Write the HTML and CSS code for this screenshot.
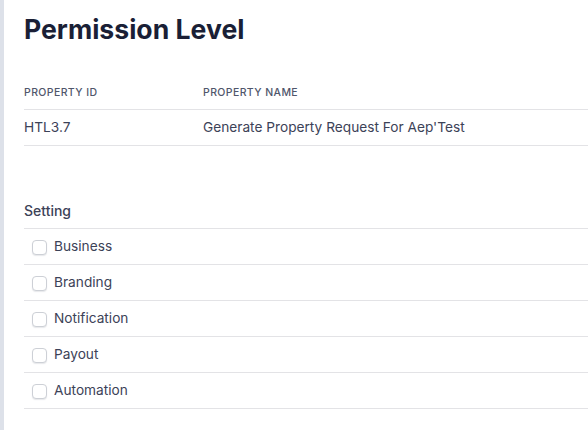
FILE: index.html
```html
<!DOCTYPE html>
<html lang="en">
<head>
    <meta charset="UTF-8">
    <meta name="viewport" content="width=device-width, initial-scale=1.0">
    <title>Permission Level</title>
    <link rel="stylesheet" href="styles.css">
</head>
<body>
    <div class="backdrop"></div>
    <main class="panel">
        <h1>Permission Level</h1>
        <table class="props">
            <thead>
                <tr>
                    <th class="col_id">Property ID</th>
                    <th>Property Name</th>
                </tr>
            </thead>
            <tbody>
                <tr>
                    <td>HTL3.7</td>
                    <td>Generate Property Request For Aep'Test</td>
                </tr>
            </tbody>
        </table>
        <section class="setting">
            <h2>Setting</h2>
            <ul>
                <li><label><input type="checkbox"><span>Business</span></label></li>
                <li><label><input type="checkbox"><span>Branding</span></label></li>
                <li><label><input type="checkbox"><span>Notification</span></label></li>
                <li><label><input type="checkbox"><span>Payout</span></label></li>
                <li><label><input type="checkbox"><span>Automation</span></label></li>
            </ul>
        </section>
    </main>
</body>
</html>
```

FILE: styles.css
```css
* {
    margin: 0;
    padding: 0;
    box-sizing: border-box;
}
body {
    display: flex;
    height: 100vh;
    overflow: hidden;
    font-family: Inter, "Noto Sans", sans-serif;
    color: #3c4257;
    background-color: #fff;
}
.backdrop {
    width: 4px;
    flex-shrink: 0;
    background-color: #dde1e9;
}
.panel {
    flex-grow: 1;
    padding: 13px 0 0 20px;
    overflow: hidden;
}
h1 {
    font-size: 26.6px;
    line-height: 32px;
    font-weight: 700;
    color: #1a1f36;
}
.props {
    width: calc(100% + 20px);
    margin-top: 35px;
    border-collapse: collapse;
}
.props th {
    text-align: left;
    font-size: 10.5px;
    font-weight: 500;
    text-transform: uppercase;
    letter-spacing: 0.4px;
    color: #4f566b;
    height: 29px;
    padding-bottom: 3px;
    border-bottom: 1px solid #e3e3e6;
}
.props .col_id {
    width: 179px;
}
.props td {
    font-size: 13.7px;
    height: 36px;
    padding-bottom: 1px;
    border-bottom: 1px solid #e3e3e6;
}
.setting {
    margin-top: 46px;
}
h2 {
    font-size: 14px;
    font-weight: 500;
    color: #3c4257;
    height: 37px;
    border-bottom: 1px solid #e3e3e6;
    padding-top: 10px;
}
.setting ul {
    list-style: none;
}
.setting li {
    height: 36px;
    border-bottom: 1px solid #e3e3e6;
}
.setting label {
    display: flex;
    align-items: center;
    gap: 7px;
    height: 100%;
    padding-left: 8px;
    font-size: 13.7px;
}
.setting input {
    appearance: none;
    width: 15px;
    height: 15px;
    margin-top: 3px;
    border: 1px solid #cdd0d6;
    border-radius: 4px;
    box-shadow: 0 1px 1px rgba(60, 66, 87, 0.12);
    background-color: #fff;
}
```
